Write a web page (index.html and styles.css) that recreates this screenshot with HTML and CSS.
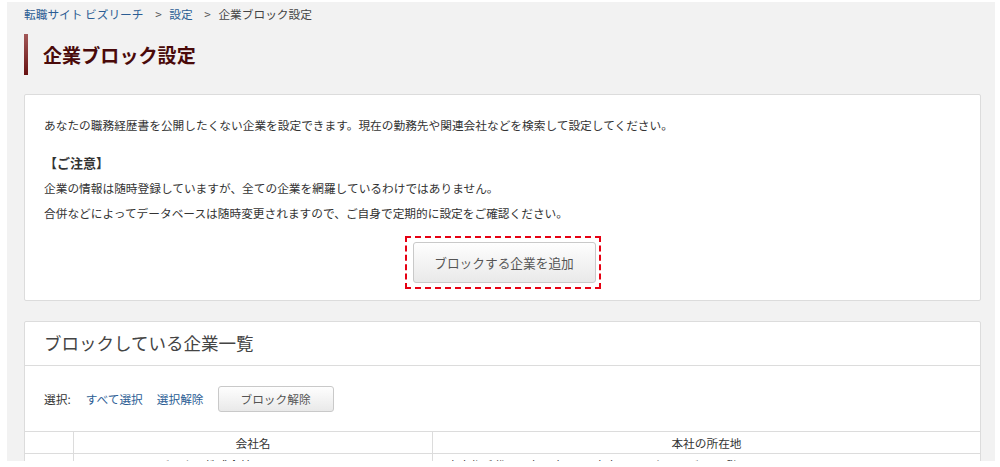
FILE: index.html
```html
<!DOCTYPE html>
<html lang="ja">
<head>
<meta charset="utf-8">
<title>企業ブロック設定</title>
<link rel="stylesheet" href="styles.css">
</head>
<body>
<div class="frame">
  <div class="page">
    <nav class="breadcrumb">
      <a href="#" class="crumb-link">転職サイト ビズリーチ</a>
      <span class="sep">&gt;</span>
      <a href="#" class="crumb-link">設定</a>
      <span class="sep">&gt;</span>
      <span class="crumb-current">企業ブロック設定</span>
    </nav>

    <h1 class="page-title">企業ブロック設定</h1>

    <section class="card intro">
      <p class="lead">あなたの職務経歴書を公開したくない企業を設定できます。現在の勤務先や関連会社などを検索して設定してください。</p>
      <p class="notice-title">【ご注意】</p>
      <p class="notice">企業の情報は随時登録していますが、全ての企業を網羅しているわけではありません。</p>
      <p class="notice">合併などによってデータベースは随時変更されますので、ご自身で定期的に設定をご確認ください。</p>
      <div class="add-row">
        <div class="highlight">
          <button class="btn btn-add" type="button">ブロックする企業を追加</button>
        </div>
      </div>
    </section>

    <section class="card list">
      <h2 class="card-header">ブロックしている企業一覧</h2>
      <div class="toolbar">
        <span class="select-label">選択:</span>
        <a href="#" class="tool-link">すべて選択</a>
        <a href="#" class="tool-link">選択解除</a>
        <button class="btn btn-unblock" type="button">ブロック解除</button>
      </div>
      <table class="company-table">
        <thead>
          <tr>
            <th class="col-check"></th>
            <th class="col-name">会社名</th>
            <th class="col-addr">本社の所在地</th>
          </tr>
        </thead>
        <tbody>
          <tr>
            <td class="col-check"><span class="checkbox"></span></td>
            <td class="col-name left">トラーベル・ビジネス株式会社</td>
            <td class="col-addr left">東京都千代田区丸の内1-1-1 東京ミッドタワービル 12階</td>
          </tr>
        </tbody>
      </table>
    </section>
  </div>
</div>
</body>
</html>
```

FILE: styles.css
```css
* {
  box-sizing: border-box;
}

html, body {
  margin: 0;
  padding: 0;
  background: #ffffff;
  overflow: hidden;
}

body {
  font-family: "Noto Sans CJK JP", "Noto Sans", sans-serif;
  font-size: 11.7px;
  color: #333333;
}

.frame {
  margin: 2px 5px 0 7px;
  height: 459px;
  background: #f2f2f2;
  overflow: hidden;
}

.page {
  padding: 0 14px 0 17px;
}

/* breadcrumb */
.breadcrumb {
  padding-top: 3px;
  line-height: 18px;
  height: 21px;
  font-size: 11.7px;
  white-space: nowrap;
}

.crumb-link {
  color: #2b5d94;
  text-decoration: none;
}

.sep {
  color: #555555;
  margin: 0 5px 0 9px;
}

.crumb-current {
  color: #444444;
}

/* page title */
.page-title {
  margin: 11px 0 0 0;
  height: 41px;
  border-left: 4px solid #7a1a1a;
  border-image: linear-gradient(#a45a5a, #661010) 1;
  padding-left: 15px;
  font-size: 19px;
  font-weight: bold;
  line-height: 41px;
  color: #4a0a0a;
  letter-spacing: 0.1px;
}

/* cards */
.card {
  background: #ffffff;
  border: 1px solid #dcdcdc;
  border-radius: 2px;
}

.intro {
  margin-top: 19px;
  padding: 17px 19px 11px 19px;
}

.intro p {
  margin: 0;
  line-height: 25px;
}

.lead {
  margin-bottom: 13px !important;
}

.notice-title {
  font-weight: bold;
  font-size: 13px;
}

.add-row {
  display: flex;
  justify-content: center;
  margin-top: 11px;
}

.highlight {
  border: 2px dashed #e60012;
  padding: 4px 3px 4px 6px;
}

.btn {
  font-family: "Noto Sans CJK JP", "Noto Sans", sans-serif;
  color: #555555;
  background: linear-gradient(#fefefe, #e9e9e9);
  border: 1px solid #c9c9c9;
  border-radius: 3px;
  cursor: pointer;
  padding: 0;
}

.btn-add {
  width: 183px;
  height: 41px;
  font-size: 12.7px;
}

.list {
  margin-top: 20px;
}

.card-header {
  margin: 0;
  height: 44px;
  padding-left: 19px;
  font-size: 17.5px;
  font-weight: normal;
  line-height: 42px;
  color: #444444;
  border-bottom: 1px solid #dcdcdc;
}

.toolbar {
  display: flex;
  align-items: center;
  padding: 19px 19px 19px 19px;
  height: 65px;
}

.select-label {
  color: #333333;
  margin-right: 15px;
}

.tool-link {
  color: #2b5d94;
  text-decoration: none;
  margin-right: 14px;
}

.btn-unblock {
  width: 116px;
  height: 26px;
  font-size: 11.7px;
  margin-left: 0;
}

.company-table {
  width: calc(100% + 2px);
  margin-left: -1px;
  border-collapse: collapse;
  font-size: 11.7px;
  color: #333333;
}

.company-table th,
.company-table td {
  border: 1px solid #dcdcdc;
  height: 22px;
  padding: 0 10px;
  font-weight: normal;
  text-align: center;
  white-space: nowrap;
}

.company-table .col-check {
  width: 49px;
}

.company-table .col-name {
  width: 359px;
}

.company-table td.left {
  text-align: left;
  padding-left: 14px;
}

.checkbox {
  display: inline-block;
  width: 12px;
  height: 12px;
  border: 1px solid #999999;
  border-radius: 2px;
  background: #ffffff;
  vertical-align: middle;
}
```
